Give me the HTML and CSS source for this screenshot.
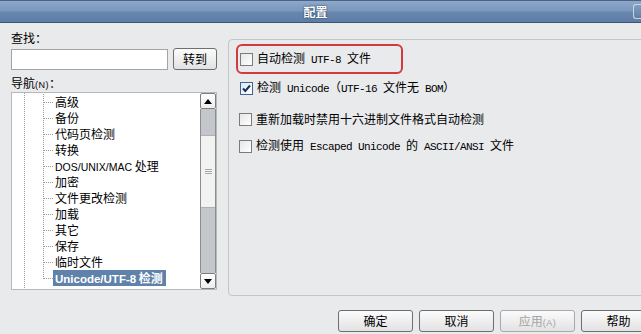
FILE: index.html
```html
<!DOCTYPE html>
<html lang="zh">
<head>
<meta charset="utf-8">
<title>配置</title>
<link rel="stylesheet" href="styles.css">
</head>
<body>
<div class="win">
  <div class="titlebar">
    <div class="title">配置</div>
    <div class="tbtn"></div>
  </div>
  <div class="content">
    <div class="left">
      <div class="lbl">查找：</div>
      <div class="findrow">
        <div class="input"></div>
        <div class="btn go">转到</div>
      </div>
      <div class="lbl nav">导航<span class="acc">(N)</span>：</div>
      <div class="tree">
        <div class="tree-list">
          <div class="item"><span class="it">高级</span></div>
          <div class="item"><span class="it">备份</span></div>
          <div class="item"><span class="it">代码页检测</span></div>
          <div class="item"><span class="it">转换</span></div>
          <div class="item"><span class="it"><span class="lat">DOS/UNIX/MAC</span> 处理</span></div>
          <div class="item"><span class="it">加密</span></div>
          <div class="item"><span class="it">文件更改检测</span></div>
          <div class="item"><span class="it">加载</span></div>
          <div class="item"><span class="it">其它</span></div>
          <div class="item"><span class="it">保存</span></div>
          <div class="item"><span class="it">临时文件</span></div>
          <div class="item last"><span class="it sel"><span class="lat">Unicode/UTF-8</span> 检测</span></div>
        </div>
        <div class="vscroll">
          <div class="sbtn"><svg width="8" height="5" viewBox="0 0 8 5"><polygon points="0,5 8,5 4,0" fill="#000"/></svg></div>
          <div class="track"><div class="thumb"><span class="grip"></span></div></div>
          <div class="sbtn"><svg width="8" height="5" viewBox="0 0 8 5"><polygon points="0,0 8,0 4,5" fill="#000"/></svg></div>
        </div>
      </div>
    </div>
    <div class="panel">
      <div class="opt hl"><span class="cb"></span><span class="txt">自动检测<span class="m"> UTF-8 </span>文件</span></div>
      <div class="opt r2"><span class="cb on"><svg width="11" height="11" viewBox="0 0 11 11"><path d="M2 5.5 L4.3 8 L9 2.5" fill="none" stroke="#16325c" stroke-width="2"/></svg></span><span class="txt">检测<span class="m"> Unicode</span>（<span class="m">UTF-16 </span>文件无<span class="m"> BOM</span>）</span></div>
      <div class="opt r3"><span class="cb"></span><span class="txt">重新加载时禁用十六进制文件格式自动检测</span></div>
      <div class="opt r4"><span class="cb"></span><span class="txt">检测使用<span class="m"> Escaped Unicode </span>的<span class="m"> ASCII/ANSI </span>文件</span></div>
    </div>
  </div>
  <div class="footer">
    <div class="btn">确定</div>
    <div class="btn">取消</div>
    <div class="btn dis">应用<span class="acc">(A)</span></div>
    <div class="btn">帮助</div>
  </div>
</div>
</body>
</html>
```
FILE: styles.css
```css
* { box-sizing: border-box; margin: 0; padding: 0; }
html, body { width: 641px; height: 334px; overflow: hidden; }
body {
  background: #e9eaec;
  font-family: "Noto Sans CJK SC", "Liberation Sans", sans-serif;
  font-size: 12px;
  color: #000;
}
.win { display: flex; flex-direction: column; height: 334px; }

.titlebar {
  height: 23px;
  flex-shrink: 0;
  display: flex;
  align-items: center;
  background: linear-gradient(#8ca8ca 0%, #7b98bd 45%, #6887af 55%, #5d7da6 100%);
  border-top: 1px solid #4b6486;
  border-bottom: 1px solid #3d5475;
}
.title {
  flex: 1;
  text-align: center;
  color: #fff;
  font-weight: bold;
  font-size: 12px;
  line-height: 21px;
  text-shadow: 0 0 2px #2a4364, 0 0 1px #2a4364;
}
.tbtn {
  flex-shrink: 0;
  width: 14px;
  height: 15px;
  margin-left: 2px;
  margin-right: -6px;
  border: 1px solid #c9d5e3;
  border-right: none;
  border-radius: 3px 0 0 3px;
  background: linear-gradient(#829fc2, #5f80a8);
}

.content {
  display: flex;
  align-items: flex-start;
  gap: 11px;
  padding-left: 11px;
  height: 273px;
  flex-shrink: 0;
}
.left { width: 206px; flex-shrink: 0; padding-top: 7px; display: flex; flex-direction: column; }
.lbl { height: 16px; line-height: 16px; }
.lbl.nav { margin-top: 5px; }
.acc { font-family: "Liberation Sans", sans-serif; font-size: 9px; letter-spacing: 0.5px; }
.findrow { display: flex; align-items: center; gap: 5px; height: 22px; margin-top: 2px; }
.input { width: 157px; height: 21px; margin-top: 1px; background: #fff; border: 1px solid #a4a4a4; }

.btn {
  width: 75px;
  height: 22px;
  border: 1px solid #6e6e6e;
  border-radius: 3px;
  background: linear-gradient(#fbfbfb, #ececec 60%, #e2e2e2);
  text-align: center;
  line-height: 20px;
  font-size: 12px;
}
.btn.go { width: 44px; }
.btn.dis { color: #a3a3a3; border-color: #a9a9a9; }

.tree {
  margin-top: 1px;
  height: 198px;
  display: flex;
  background: #fff;
  border: 1px solid #b8b8b8;
}
.tree-list {
  flex: 1;
  padding-top: 1px;
  padding-left: 31px;
  background-image: repeating-linear-gradient(to bottom, #9a9a9a 0 1px, transparent 1px 2px);
  background-repeat: no-repeat;
  background-position: 12px 0;
  background-size: 1px 100%;
}
.item {
  height: 16px;
  line-height: 16px;
  padding-left: 10px;
  white-space: nowrap;
  background-image:
    repeating-linear-gradient(to bottom, #9a9a9a 0 1px, transparent 1px 2px),
    repeating-linear-gradient(to right, #9a9a9a 0 1px, transparent 1px 2px);
  background-repeat: no-repeat;
  background-position: 0 0, 1px 8px;
  background-size: 1px 16px, 9px 1px;
}
.item.last { background-size: 1px 9px, 9px 1px; }
.it { display: inline-block; padding: 0 2px; height: 16px; }
.lat { font-family: "Liberation Sans", sans-serif; font-size: 10.5px; }
.it.sel { background: #5f82aa; color: #fff; font-weight: bold; padding-right: 3px; }
.it.sel .lat { font-size: 11.5px; }

.vscroll { width: 16px; flex-shrink: 0; display: flex; flex-direction: column; }
.sbtn {
  height: 16px;
  flex-shrink: 0;
  border: 1px solid #7d7d7d;
  border-radius: 2px;
  background: linear-gradient(#ffffff, #ededed);
  display: flex;
  align-items: center;
  justify-content: center;
}
.track {
  flex: 1;
  background: #c3c7cc;
  border-left: 1px solid #8c8c8c;
  border-right: 1px solid #8c8c8c;
  padding-top: 26px;
}
.thumb {
  height: 73px;
  background: #f2f2f2;
  border-top: 1px solid #b0b0b0;
  border-bottom: 1px solid #b0b0b0;
  display: flex;
  align-items: center;
  justify-content: center;
}
.grip {
  width: 7px;
  height: 5px;
  border-top: 1px solid #a9a9a9;
  border-bottom: 1px solid #a9a9a9;
  background: linear-gradient(#a9a9a9, #a9a9a9) center / 100% 1px no-repeat;
}

.panel {
  flex-shrink: 0;
  width: 430px;
  height: 257px;
  margin-top: 16px;
  border: 1px solid #c4c5c8;
  border-radius: 4px;
  padding: 4px 0 0 7px;
  display: flex;
  flex-direction: column;
  align-items: flex-start;
}
.opt { display: flex; align-items: center; gap: 4px; height: 16px; white-space: nowrap; padding-left: 4px; }
.opt.hl {
  height: 30px;
  width: 167px;
  padding-left: 2px;
  border: 2px solid #d23a40;
  border-radius: 6px;
}
.opt.r2 { margin-top: 6px; }
.opt.r3 { margin-top: 15px; padding-left: 3px; }
.opt.r4 { margin-top: 11px; padding-left: 3px; }
.cb {
  width: 13px;
  height: 13px;
  flex-shrink: 0;
  border: 1px solid #7b7b7b;
  background: linear-gradient(135deg, #e6e6e6, #ffffff);
  display: flex;
  align-items: center;
  justify-content: center;
}
.cb.on { border-color: #3f6594; background: linear-gradient(135deg, #dfe8f3, #ffffff); }
.txt { font-size: 12px; line-height: 16px; }
.m { font-family: "Liberation Mono", monospace; font-size: 11px; letter-spacing: -0.6px; white-space: pre; }

.footer {
  flex: 1;
  display: flex;
  gap: 6px;
  padding-top: 14px;
  padding-left: 338px;
}
.footer .btn { flex-shrink: 0; }
```
